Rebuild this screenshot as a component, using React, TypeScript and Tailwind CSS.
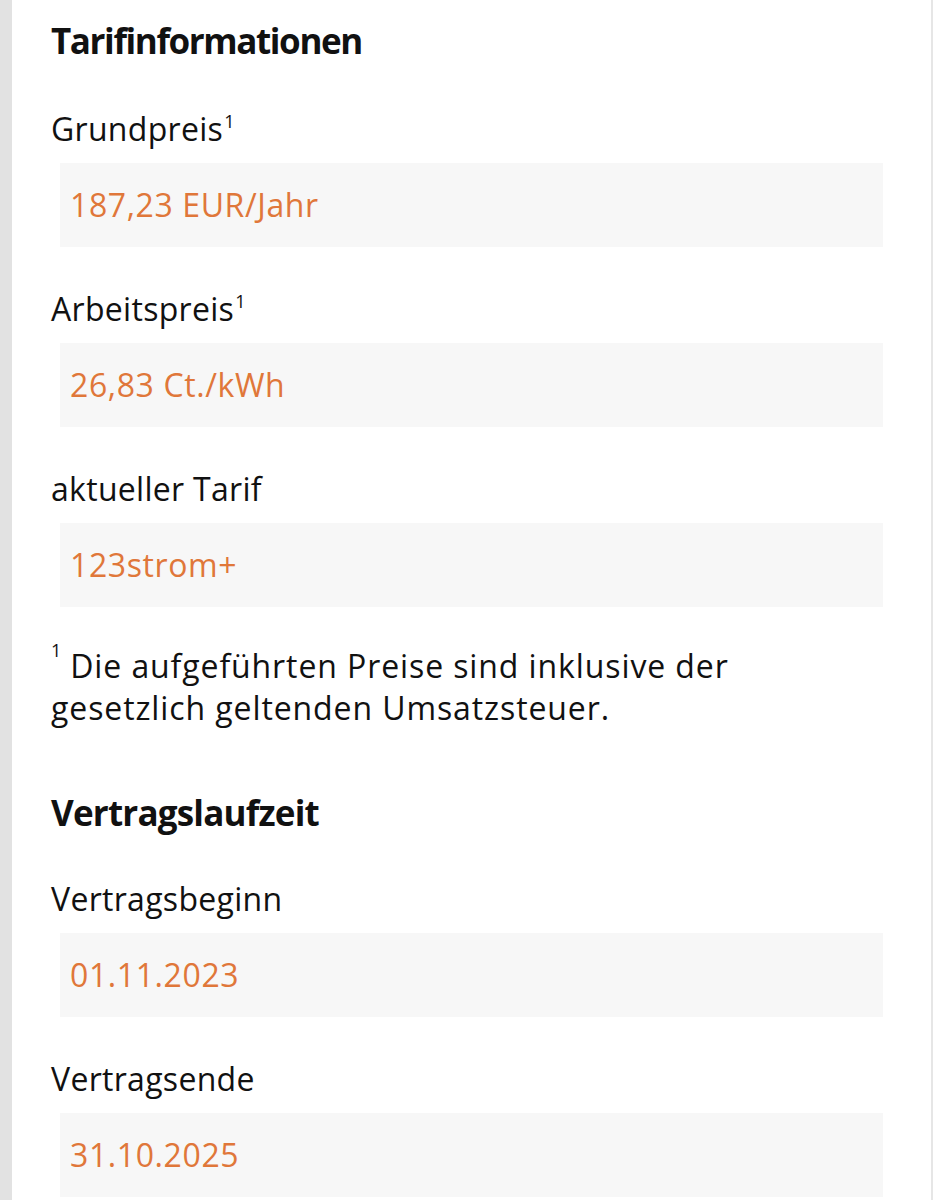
const font = { fontFamily: '"Open Sans", Lato, sans-serif' }

function Sup() {
  return <sup className="relative -top-[0.1em] ml-[1px] align-super text-[18px] leading-none">1</sup>
}

function Field({ label, value, sup, top = 'mt-[40px]' }: { label: string; value: string; sup?: boolean; top?: string }) {
  return (
    <div className={top}>
      <div className="text-[32px] leading-[44px] tracking-[0.3px] text-[#111]">
        {label}
        {sup && <Sup />}
      </div>
      <div className="ml-[9px] mt-[12px] flex h-[84px] items-center bg-[#f7f7f7] px-[10px]">
        <span className="text-[32px] leading-none tracking-[0.6px] text-[#e0773a]">{value}</span>
      </div>
    </div>
  )
}

export default function App() {
  return (
    <div className="flex min-h-screen w-full bg-white" style={font}>
      <div className="w-[12px] shrink-0 bg-[#e2e2e2]" />
      <div className="flex-1 border-r-2 border-[#e6e6e6] pb-8 pl-[39px] pr-[48px] pt-[18px]">
        <h2 className="text-[35px] font-bold leading-[46px] tracking-[-1.4px] text-[#111]">Tarifinformationen</h2>
        <Field label="Grundpreis" value="187,23 EUR/Jahr" sup top="mt-[43px]" />
        <Field label="Arbeitspreis" value="26,83 Ct./kWh" sup />
        <Field label="aktueller Tarif" value="123strom+" />

        <p className="mt-[38px] text-[32px] leading-[42px] tracking-[0.9px] text-[#111]">
          <sup className="mr-[8px] align-super text-[18px] leading-none">1</sup>
          Die aufgeführten Preise sind inklusive der
          <br />
          gesetzlich geltenden Umsatzsteuer.
        </p>

        <h2 className="mt-[61px] text-[35px] font-bold leading-[46px] tracking-[-0.8px] text-[#111]">Vertragslaufzeit</h2>
        <Field label="Vertragsbeginn" value="01.11.2023" top="mt-[41px]" />
        <Field label="Vertragsende" value="31.10.2025" />
      </div>
    </div>
  )
}
